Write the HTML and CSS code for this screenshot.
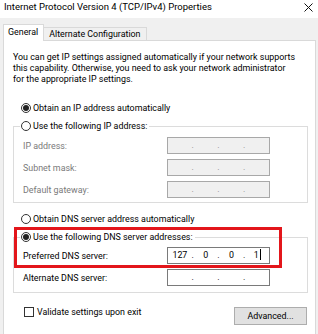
FILE: index.html
```html
<!DOCTYPE html>
<html>
<head>
<meta charset="utf-8">
<link rel="stylesheet" href="styles.css">
</head>
<body>
<div class="window">
  <div class="titlebar">
    <span class="title">Internet Protocol Version 4 (TCP/IPv4) Properties</span>
    <svg class="close" width="9" height="9" viewBox="0 0 9 9"><path d="M0.5 0.5L8.5 8.5M8.5 0.5L0.5 8.5" stroke="#111" stroke-width="1" fill="none"/></svg>
  </div>
  <div class="frame">
    <div class="tabs">
      <div class="tab active">General</div>
      <div class="tab">Alternate Configuration</div>
    </div>
    <div class="panel">
      <p class="intro">You can get IP settings assigned automatically if your network supports<br>this capability. Otherwise, you need to ask your network administrator<br>for the appropriate IP settings.</p>

      <div class="option first"><span class="radio checked"></span>Obtain an IP address automatically</div>

      <fieldset class="group ip">
        <legend><span class="radio"></span>Use the following IP address:</legend>
        <div class="field disabled">
          <span class="label">IP address:</span>
          <div class="ipbox"><span></span><i>.</i><span></span><i>.</i><span></span><i>.</i><span></span></div>
        </div>
        <div class="field disabled">
          <span class="label">Subnet mask:</span>
          <div class="ipbox"><span></span><i>.</i><span></span><i>.</i><span></span><i>.</i><span></span></div>
        </div>
        <div class="field disabled">
          <span class="label">Default gateway:</span>
          <div class="ipbox"><span></span><i>.</i><span></span><i>.</i><span></span><i>.</i><span></span></div>
        </div>
      </fieldset>

      <div class="option dns-auto"><span class="radio"></span>Obtain DNS server address automatically</div>

      <fieldset class="group dns">
        <legend><span class="radio checked"></span>Use the following DNS server addresses:</legend>
        <div class="field">
          <span class="label">Preferred DNS server:</span>
          <div class="ipbox"><span>127</span><i>.</i><span>0</span><i>.</i><span>0</span><i>.</i><span class="last">1<b class="caret"></b></span></div>
        </div>
        <div class="field">
          <span class="label">Alternate DNS server:</span>
          <div class="ipbox"><span></span><i>.</i><span></span><i>.</i><span></span><i>.</i><span></span></div>
        </div>
      </fieldset>

      <div class="footer">
        <div class="check"><span class="box"></span>Validate settings upon exit</div>
        <div class="button">Advanced...</div>
      </div>

      <div class="highlight"></div>
    </div>
  </div>
</div>
</body>
</html>
```

FILE: styles.css
```css
* { box-sizing: border-box; }
html, body { margin: 0; padding: 0; background: #fff; }
body {
  font-family: Roboto, "Noto Sans", sans-serif;
  font-size: 8.9px;
  color: #000;
}
.window { width: 318px; height: 334px; overflow: hidden; display: flex; flex-direction: column; }

.titlebar {
  height: 18px;
  flex: none;
  display: flex;
  align-items: center;
  justify-content: space-between;
  padding: 0 4px 4px 4px;
  background: #fff;
}
.title { font-size: 9.5px; line-height: 12px; }
.close { margin-right: 1px; }

.frame {
  flex: 1;
  background: #f0f0f0;
  padding: 6px 2px 0 3px;
  display: flex;
  flex-direction: column;
}
.tabs { display: flex; align-items: flex-end; height: 16px; flex: none; }
.tab {
  border: 1px solid #d9d9d9;
  border-bottom: none;
  padding: 0 4px 0 5px;
  line-height: 12px;
  height: 13px;
  background: #f0f0f0;
  white-space: nowrap;
}
.tab.active {
  background: #fff;
  height: 17px;
  line-height: 15px;
  margin-bottom: -1px;
  position: relative;
  z-index: 1;
  padding: 0 5px 0 4px;
}
.tab + .tab { border-left: none; padding: 0 5px 0 5px; }

.panel {
  flex: 1;
  background: #fff;
  border: 1px solid #d9d9d9;
  border-bottom: none;
  padding: 11px 7px 0 9px;
  position: relative;
}
.intro { margin: 0; line-height: 11px; white-space: nowrap; }

.option { display: flex; align-items: center; line-height: 12px; height: 12px; padding-left: 8px; white-space: nowrap; }
.option.first { margin-top: 17px; }
.option.dns-auto { margin-top: 10px; }

.radio {
  width: 10px; height: 10px;
  border: 1px solid #333;
  border-radius: 50%;
  margin-right: 2px;
  display: inline-flex;
  align-items: center;
  justify-content: center;
  flex: none;
  background: #fff;
}
.radio.checked::after {
  content: "";
  width: 6px; height: 6px;
  border-radius: 50%;
  background: #222;
}

.group {
  margin: 6px 0 0 0;
  border: 1px solid #dcdcdc;
  padding: 5px 0 4px 6px;
  min-width: 0;
}
.group.dns { padding: 4px 0 6px 6px; }
.group legend {
  padding: 0 2px 0 1px;
  line-height: 12px;
  height: 12px;
  display: flex;
  align-items: center;
  white-space: nowrap;
  background: #fff;
}

.field {
  display: grid;
  grid-template-columns: 144px 103px;
  align-items: center;
  padding-left: 3px;
  height: 17px;
}
.field + .field { margin-top: 5px; }
.field.disabled .label { color: #7a7a7a; }

.ipbox {
  height: 17px;
  border: 1px solid #7a7a7a;
  background: #fff;
  display: grid;
  grid-template-columns: 1fr 2px 1fr 2px 1fr 2px 1fr;
  align-items: center;
  line-height: 15px;
}
.ipbox span { text-align: center; position: relative; }
.ipbox i { font-style: normal; text-align: center; width: 2px; display: flex; justify-content: center; }
.field.disabled .ipbox { background: #f0f0f0; border-color: #a8a8a8; }
.field.disabled .ipbox i { color: #8a8a8a; }
.caret {
  display: inline-block;
  width: 1px;
  height: 11px;
  background: #000;
  vertical-align: -2px;
  margin-left: 1px;
}

.footer {
  margin-top: 13px;
  display: flex;
  justify-content: space-between;
  align-items: flex-start;
}
.check { display: flex; align-items: center; line-height: 12px; height: 12px; padding-left: 11px; }
.check .box {
  width: 10px; height: 10px;
  border: 1px solid #333;
  background: #fff;
  margin-right: 3px;
}
.button {
  margin-top: 1px;
  margin-right: 1px;
  width: 73px;
  height: 18px;
  background: #e1e1e1;
  border: 1px solid #adadad;
  display: flex;
  align-items: center;
  justify-content: center;
  line-height: 12px;
}

.highlight {
  position: absolute;
  left: 10px;
  top: 186px;
  width: 268px;
  height: 41px;
  border: 3px solid #e3161b;
  pointer-events: none;
}
```
